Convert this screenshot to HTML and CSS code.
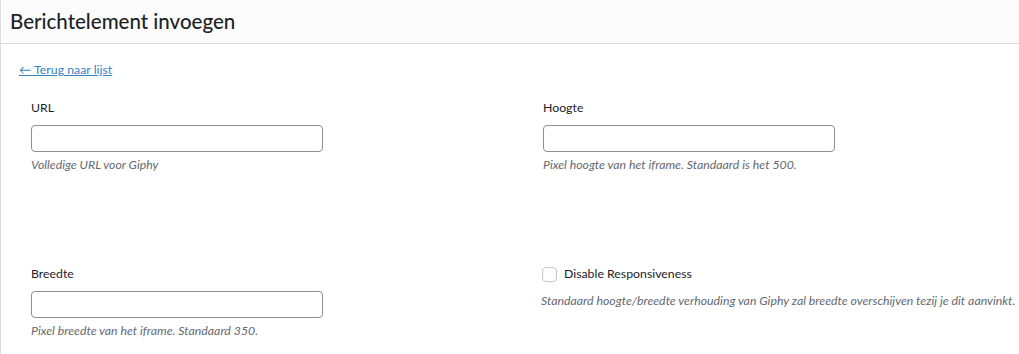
FILE: index.html
```html
<!DOCTYPE html>
<html lang="nl">
<head>
<meta charset="utf-8">
<title>Berichtelement invoegen</title>
<link rel="stylesheet" href="styles.css">
</head>
<body>
<div class="frame">
  <header class="frame-title">
    <h1>Berichtelement invoegen</h1>
  </header>
  <div class="frame-content">
    <a class="back-link" href="#">&larr; Terug naar lijst</a>
    <div class="fields">
      <div class="field">
        <label class="field-label" for="url">URL</label>
        <input class="text-input" id="url" type="text">
        <p class="desc">Volledige URL voor Giphy</p>
      </div>
      <div class="field">
        <label class="field-label" for="hoogte">Hoogte</label>
        <input class="text-input" id="hoogte" type="text">
        <p class="desc">Pixel hoogte van het iframe. Standaard is het 500.</p>
      </div>
      <div class="field">
        <label class="field-label" for="breedte">Breedte</label>
        <input class="text-input" id="breedte" type="text">
        <p class="desc">Pixel breedte van het iframe. Standaard 350.</p>
      </div>
      <div class="field">
        <label class="check-label"><span class="checkbox"></span><span>Disable Responsiveness</span></label>
        <p class="desc desc-check">Standaard hoogte/breedte verhouding van Giphy zal breedte overschijven tezij je dit aanvinkt.</p>
      </div>
    </div>
  </div>
</div>
</body>
</html>
```
FILE: styles.css
```css
html, body {
  margin: 0;
  padding: 0;
  background: #fff;
}
body {
  font-family: Lato, "Open Sans", sans-serif;
  color: #1d2327;
  font-size: 12.3px;
}
.frame {
  border-left: 1px solid #dcdcde;
  min-height: 354px;
  box-sizing: border-box;
}
.frame-title {
  background: #fcfcfc;
  border-bottom: 1px solid #dcdcde;
  height: 43px;
  display: flex;
  align-items: center;
  padding-left: 9px;
}
.frame-title h1 {
  margin: 0;
  font-size: 20.5px;
  font-weight: 500;
  color: #1d2327;
  line-height: 1;
}
.frame-content {
  padding: 18px 0 0 18px;
}
.back-link {
  display: block;
  color: #3582c4;
  font-size: 12.3px;
  line-height: 16px;
  text-decoration: underline;
}
.fields {
  display: grid;
  grid-template-columns: 512px 1fr;
  grid-template-rows: 166px auto;
  padding: 22px 0 0 12px;
}
.field {
  display: flex;
  flex-direction: column;
  align-items: flex-start;
}
.field-label {
  font-size: 12.3px;
  line-height: 16px;
  margin-bottom: 9px;
}
.text-input {
  width: 292px;
  height: 27px;
  box-sizing: border-box;
  border: 1px solid #8c8f94;
  border-radius: 4px;
  background: #fff;
  margin: 0;
  padding: 0 8px;
}
.desc {
  margin: 5px 0 0;
  font-size: 12.3px;
  line-height: 16px;
  font-style: italic;
  color: #646970;
}
.check-label {
  display: flex;
  align-items: center;
  gap: 7px;
  font-size: 12.3px;
  line-height: 16px;
  margin-left: -1px;
  margin-top: 0;
}
.checkbox {
  width: 15px;
  height: 15px;
  box-sizing: border-box;
  border: 1px solid #c8c8c8;
  border-radius: 4px;
  background: #fff;
}
.desc-check {
  margin-top: 11px;
  margin-left: -2px;
}
```
